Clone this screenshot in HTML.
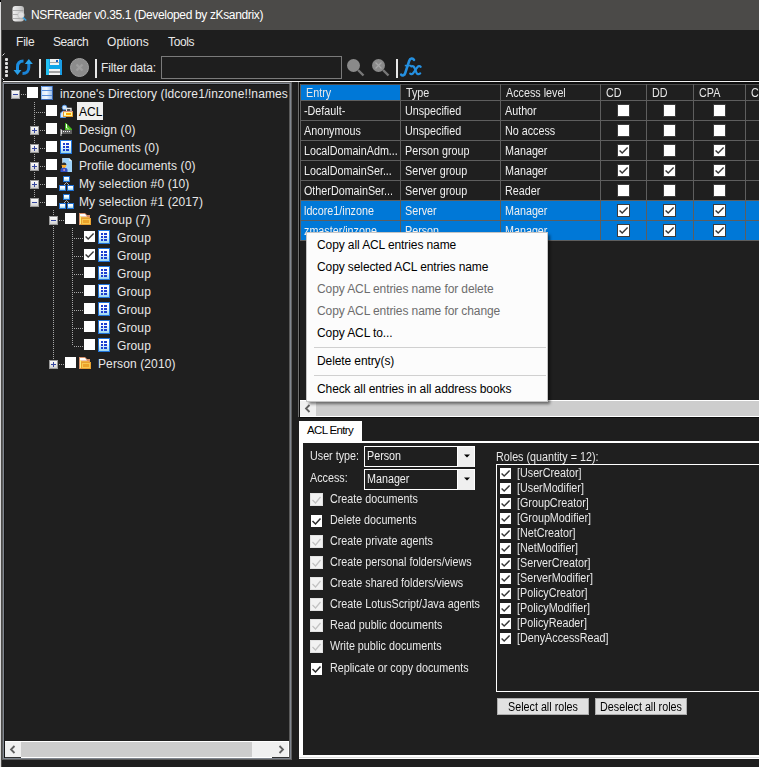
<!DOCTYPE html><html><head><meta charset="utf-8"><style>
*{margin:0;padding:0;box-sizing:border-box}
html,body{width:759px;height:767px;overflow:hidden;background:#1e1e1e}
body{position:relative;font-family:"Liberation Sans",sans-serif;font-size:12px;color:#e8e8e8}
.a{position:absolute}
.t{position:absolute;white-space:nowrap;line-height:14px}
.cb{position:absolute;width:11px;height:11px;background:#fff}
.exp{position:absolute;width:9px;height:9px;background:linear-gradient(#fbfbfb,#e4e4e4 60%,#cfcfcf);border:1px solid #9a9a9a}
.exp:before{content:"";position:absolute;left:1px;top:3px;width:5px;height:1px;background:#3446a0}
.exp.p:after{content:"";position:absolute;left:3px;top:1px;width:1px;height:5px;background:#3446a0}
.vd{position:absolute;width:1px;background:repeating-linear-gradient(#a8a8a8 0 1px,transparent 1px 2px)}
.hd{position:absolute;height:1px;background:repeating-linear-gradient(90deg,#a8a8a8 0 1px,transparent 1px 2px)}
svg{position:absolute;overflow:visible}
.ms{font-size:12.5px;transform:scaleX(.86);transform-origin:0 0}
</style></head><body>
<div class="a" style="left:0;top:0;width:759px;height:30px;background:#4b4a48"></div>
<div class="a" style="left:0;top:2px;width:1px;height:765px;background:#dcdcdc"></div>
<div class="a" style="left:1px;top:30px;width:1px;height:737px;background:#4d4c4a"></div>
<div class="a" style="left:0;top:0;width:1px;height:2px;background:#000"></div>
<svg style="left:12px;top:5px" width="16" height="17" viewBox="0 0 16 17">
<defs><linearGradient id="dbg" x1="0" x2="1"><stop offset="0" stop-color="#f0f0f0"/><stop offset=".5" stop-color="#d8d8d8"/><stop offset="1" stop-color="#b8b8b8"/></linearGradient></defs>
<rect x="0.5" y="1" width="11.5" height="15.5" rx="3" fill="url(#dbg)"/>
<path d="M1 5.5h10.5M1 9.5h10.5M1 13.5h10.5" stroke="#a0a0a0" stroke-width=".8"/>
<circle cx="9" cy="10" r="3.2" fill="#e0e0e0" stroke="#b8b8b8" stroke-width=".6"/>
<path d="M11.2 12.5l3 3" stroke="#35a0e0" stroke-width="1.6"/>
</svg>
<div class="t" style="left:31px;top:8px;color:#fff;font-size:12px;letter-spacing:-0.35px">NSFReader v0.35.1 (Developed by zKsandrix)</div>
<div class="t" style="left:16px;top:35px;font-size:12px;letter-spacing:-0.2px">File</div>
<div class="t" style="left:53px;top:35px;font-size:12px;letter-spacing:-0.45px">Search</div>
<div class="t" style="left:107px;top:35px;font-size:12px;letter-spacing:0.05px">Options</div>
<div class="t" style="left:168px;top:35px;font-size:12px;letter-spacing:-0.35px">Tools</div>
<div class="a" style="left:5px;top:58px;width:3px;height:3px;border-radius:1px;background:#e0e0e0"></div>
<div class="a" style="left:5px;top:62px;width:3px;height:3px;border-radius:1px;background:#e0e0e0"></div>
<div class="a" style="left:5px;top:66px;width:3px;height:3px;border-radius:1px;background:#e0e0e0"></div>
<div class="a" style="left:5px;top:70px;width:3px;height:3px;border-radius:1px;background:#e0e0e0"></div>
<div class="a" style="left:5px;top:74px;width:3px;height:3px;border-radius:1px;background:#e0e0e0"></div>
<svg style="left:2px;top:53px" width="3" height="3" viewBox="0 0 3 3"><path d="M0.5 2.5L2.5 0.5" stroke="#e8e8e8" stroke-width="1"/></svg>
<svg style="left:2px;top:78px" width="3" height="3" viewBox="0 0 3 3"><path d="M0.5 0.5L2.5 2.5" stroke="#e8e8e8" stroke-width="1"/></svg>
<svg style="left:13px;top:58px" width="21" height="18" viewBox="0 0 21 18">
<path d="M10.5 3C6.5 3 4.5 5.5 4.5 9V12" fill="none" stroke="#1c8ee0" stroke-width="3"/>
<path d="M0.5 12h8l-4 5z" fill="#2aa0ea"/>
<path d="M9.5 15.5C13.5 15.5 15.8 13 15.8 9.5V6" fill="none" stroke="#1a84d8" stroke-width="3"/>
<path d="M11.8 6h8l-4-5z" fill="#2aa6ee"/>
</svg>
<div class="a" style="left:39px;top:59px;width:2px;height:19px;background:#e8e8e8"></div>
<svg style="left:46px;top:59px" width="16" height="16" viewBox="0 0 16 16" shape-rendering="crispEdges">
<path d="M0 0H14L16 2V16H0Z" fill="#1a9ee6"/><rect x="0" y="0" width="3" height="16" fill="#22c2f4"/>
<rect x="4" y="0" width="9" height="6" fill="#f2f2f2"/><rect x="4" y="3" width="9" height="1" fill="#a8a8a8"/><rect x="10" y="1" width="2" height="2" fill="#1a5fc0"/>
<rect x="3" y="6" width="11" height="4" fill="#10a6e8"/>
<rect x="3" y="10" width="11" height="6" fill="#f4f4f4"/><rect x="3" y="12" width="11" height="2" fill="#a4a4a4"/>
</svg>
<svg style="left:70px;top:58px" width="19" height="19" viewBox="0 0 19 19">
<circle cx="9.5" cy="9.5" r="9" fill="#8c8c8c" stroke="#a2a2a2" stroke-width="1"/>
<path d="M6.5 6.5l6 6M12.5 6.5l-6 6" stroke="#9e9e9e" stroke-width="2.4"/>
</svg>
<div class="a" style="left:95px;top:59px;width:2px;height:19px;background:#e8e8e8"></div>
<div class="t" style="left:101px;top:61px;font-size:12px;letter-spacing:-0.15px">Filter data:</div>
<div class="a" style="left:161px;top:56px;width:181px;height:23px;border:1px solid #7a7a7a"></div>
<svg style="left:346px;top:58px" width="19" height="19" viewBox="0 0 19 19">
<circle cx="7.5" cy="7.5" r="6.5" fill="#8a8a8a"/>
<path d="M12 12l5.5 5.5" stroke="#777" stroke-width="2.4"/>
</svg>
<svg style="left:371px;top:58px" width="19" height="19" viewBox="0 0 19 19">
<circle cx="7.5" cy="7.5" r="6.5" fill="#8a8a8a"/>
<path d="M4.5 4.5l6 6M10.5 4.5l-6 6" stroke="#a8a8a8" stroke-width="1.3"/>
<path d="M12 12l5.5 5.5" stroke="#777" stroke-width="2.4"/>
</svg>
<div class="a" style="left:396px;top:59px;width:2px;height:19px;background:#e8e8e8"></div>
<svg style="left:398px;top:56px" width="26" height="22" viewBox="0 0 26 22">
<path d="M16 3.8C14.8 1.8 12 2.2 11.2 4.8L7.2 17.2C6.6 19.4 4.4 20.2 3.2 18.6" fill="none" stroke="#2590e0" stroke-width="2.6" stroke-linecap="round"/>
<path d="M6.8 9.6H13.4" stroke="#2590e0" stroke-width="1.6"/>
<path d="M13.2 10.4C15.2 9.6 16.2 10.6 17 13L18.4 16.6C19 18.4 20.6 18.6 22.2 17.4" fill="none" stroke="#2590e0" stroke-width="2.2" stroke-linecap="round"/>
<path d="M22.6 10.8C21.6 9.6 20.2 10 19.2 11.4L15.4 16.8C14.4 18.4 13 18.6 12.2 17.6" fill="none" stroke="#2590e0" stroke-width="2.2" stroke-linecap="round"/>
</svg>
<div class="a" style="left:3px;top:80px;width:756px;height:1px;background:#0c0c0c"></div>
<div class="a" style="left:3px;top:81px;width:756px;height:1px;background:#f0f0f0"></div>
<div class="a" style="left:2px;top:82px;width:290px;height:678px;border:1px solid #5e5e5e;background:#1f1f1f"></div>
<div class="a" style="left:3px;top:83px;width:288px;height:676px;border:1px solid #80868f"></div>
<div class="a" style="left:4px;top:84px;width:1px;height:674px;background:#151515"></div>
<div class="a" style="left:4px;top:84px;width:286px;height:1px;background:#151515"></div>
<div class="a" style="left:289px;top:84px;width:1px;height:674px;background:#5a5a5a"></div>
<svg width="0" height="0" style="left:0;top:0"><defs>
<linearGradient id="gbl" x1="0" y1="0" x2="0" y2="1"><stop offset="0" stop-color="#ffffff"/><stop offset=".4" stop-color="#f4fbff"/><stop offset="1" stop-color="#98d4f0"/></linearGradient>
<linearGradient id="gdbrow" x1="0" y1="0" x2="1" y2="0"><stop offset="0" stop-color="#dceafb"/><stop offset=".45" stop-color="#f0f6fd"/><stop offset="1" stop-color="#9cc0ec"/></linearGradient>
<symbol id="idb" viewBox="0 0 12 14"><rect x="0" y="0" width="12" height="14" fill="#5a8fdc"/><rect x="0" y="0" width="1" height="14" fill="#86b6f0"/><rect x="11" y="0" width="1" height="14" fill="#3a66b0"/><rect x="0" y="13" width="12" height="1" fill="#3c68b2"/>
<rect x="1" y="1" width="10" height="3" fill="url(#gdbrow)"/><rect x="1" y="5" width="10" height="4" fill="url(#gdbrow)"/><rect x="1" y="10" width="10" height="3" fill="url(#gdbrow)"/></symbol>
<symbol id="iacl" viewBox="0 0 16 16"><circle cx="6.5" cy="5.5" r="2.3" fill="#d8e8fa" stroke="#5a9ae8" stroke-width="1"/><path d="M2.5 15.5v-2.5a3 3.5 0 0 1 5 -3v5.5z" fill="#d8e8fa" stroke="#5a9ae8" stroke-width="1"/>
<path d="M8.5 9V6.5h4.5V9" fill="none" stroke="#e8e8e8" stroke-width="1.4"/><rect x="9.5" y="7" width="2.5" height="2" fill="#505050"/>
<rect x="5" y="9" width="10" height="6" fill="#e39a2a"/><rect x="6" y="10" width="8" height="4" fill="#fff59a"/><rect x="8" y="11" width="5" height="2" fill="#ffa800"/><rect x="6.5" y="11" width="1" height="2" fill="#fff"/><rect x="5" y="9" width="10" height="1" fill="#d89080"/></symbol>
<symbol id="idesign" viewBox="0 0 16 16" shape-rendering="crispEdges"><path d="M7 3H8L14 9V10H7Z" fill="#44b820" shape-rendering="auto"/><path d="M8.5 6.5L12 9.5H8.5Z" fill="#9ae070" shape-rendering="auto"/><rect x="8" y="4" width="1" height="4" fill="#ffffff"/>
<rect x="4" y="10" width="10" height="4" fill="#5e5e5e"/><rect x="5" y="11" width="1" height="1" fill="#f4f4f4"/><rect x="7" y="11" width="1" height="1" fill="#f4f4f4"/><rect x="9" y="11" width="1" height="1" fill="#f4f4f4"/><rect x="11" y="11" width="1" height="1" fill="#f4f4f4"/>
<rect x="2" y="9" width="2" height="7" fill="#7a7a7a"/><rect x="3" y="10" width="1" height="4" fill="#e0e0e0"/></symbol>
<symbol id="idoc" viewBox="0 0 16 16" shape-rendering="crispEdges"><rect x="2" y="2" width="12" height="14" fill="#1f72d8"/><rect x="3" y="3" width="10" height="12" fill="url(#gbl)"/>
<rect x="5" y="5" width="2" height="2" fill="#1b3ed0"/><rect x="8" y="5" width="3" height="2" fill="#1b3ed0"/><rect x="5" y="8" width="2" height="2" fill="#1b3ed0"/><rect x="8" y="8" width="3" height="2" fill="#1b3ed0"/><rect x="5" y="11" width="2" height="2" fill="#1b3ed0"/><rect x="8" y="11" width="3" height="2" fill="#1b3ed0"/></symbol>
<symbol id="iprof" viewBox="0 0 16 16"><path d="M4 2h7l3 3v11H4z" fill="#9fd3fb"/><path d="M11 2v3h3z" fill="#e0f2ff"/><rect x="4" y="2" width="1" height="14" fill="#b0b8c0"/>
<circle cx="6" cy="9.5" r="2.3" fill="#ffb030"/><path d="M3.6 9a2.4 2.6 0 0 1 4.8 0z" fill="#333"/><rect x="5" y="11" width="2" height="2" fill="#ff9f20"/><path d="M2.5 16v-2a3.5 2.2 0 0 1 7 0v2z" fill="#3050c8"/><rect x="5.5" y="13" width="1.2" height="2" fill="#f4a0b0"/></symbol>
<symbol id="isel" viewBox="0 0 20 20"><path d="M9.5 8.5L7 11M9.5 8.5L12 11" stroke="#b0b0b0" stroke-width="1" fill="none"/>
<rect x="6" y="2" width="7" height="6" fill="#1e6fd0"/><rect x="7" y="3" width="5" height="4" fill="url(#gbl)"/>
<rect x="2" y="11" width="7" height="6" fill="#1e6fd0"/><rect x="3" y="12" width="5" height="4" fill="url(#gbl)"/>
<rect x="10" y="11" width="7" height="6" fill="#1e6fd0"/><rect x="11" y="12" width="5" height="4" fill="url(#gbl)"/></symbol>
<symbol id="ifold" viewBox="0 0 18 18"><path d="M2 3h6l2 2h3v10H2z" fill="#d8906a"/><path d="M3 4h5l2 2.5H3z" fill="#ffffff"/><rect x="3" y="6" width="1" height="8" fill="#fff080"/><rect x="4" y="7" width="8" height="1" fill="#f0b040"/>
<rect x="4" y="8" width="10" height="7" fill="#e8a030"/><rect x="5" y="9" width="8" height="5" fill="#f8c850"/><rect x="6" y="10" width="6" height="3" fill="#eca42a"/></symbol>
<symbol id="ichk" viewBox="0 0 11 11"><path d="M1.6 5.4L4.2 8L9.6 2.6" fill="none" stroke="#383838" stroke-width="1.4"/></symbol>
</defs></svg>
<div class="vd" style="left:34px;top:102px;height:101px"></div>
<div class="vd" style="left:53px;top:210px;height:154px"></div>
<div class="vd" style="left:72px;top:228px;height:118px"></div>
<div class="a" style="left:5px;top:84px;width:284px;height:674px;overflow:hidden">
<div class="hd" style="left:16px;top:10px;width:6px"></div>
<div class="exp" style="left:6px;top:6px"></div>
<div class="cb" style="left:22px;top:3px"></div>
<svg style="left:36px;top:2px" width="12" height="14"><use href="#idb"/></svg>
<div class="t" style="left:55px;top:3px;letter-spacing:0.12px">inzone's Directory (ldcore1/inzone!!names</div>
<div class="hd" style="left:31px;top:28px;width:10px"></div>
<div class="cb" style="left:41px;top:21px"></div>
<svg style="left:53px;top:18px" width="16" height="16"><use href="#iacl"/></svg>
<div class="a" style="left:72px;top:18px;width:26px;height:18px;background:#f0f0f0"></div>
<div class="t" style="left:74px;top:21px;color:#000">ACL</div>
<div class="hd" style="left:35px;top:46px;width:6px"></div>
<div class="exp p" style="left:25px;top:42px"></div>
<div class="cb" style="left:41px;top:39px"></div>
<svg style="left:53px;top:36px" width="16" height="16"><use href="#idesign"/></svg>
<div class="t" style="left:74px;top:39px;letter-spacing:0.12px">Design (0)</div>
<div class="hd" style="left:35px;top:64px;width:6px"></div>
<div class="exp p" style="left:25px;top:60px"></div>
<div class="cb" style="left:41px;top:57px"></div>
<svg style="left:53px;top:54px" width="16" height="16"><use href="#idoc"/></svg>
<div class="t" style="left:74px;top:57px;letter-spacing:0.12px">Documents (0)</div>
<div class="hd" style="left:35px;top:82px;width:6px"></div>
<div class="exp p" style="left:25px;top:78px"></div>
<div class="cb" style="left:41px;top:75px"></div>
<svg style="left:53px;top:72px" width="16" height="16"><use href="#iprof"/></svg>
<div class="t" style="left:74px;top:75px;letter-spacing:0.12px">Profile documents (0)</div>
<div class="hd" style="left:35px;top:100px;width:6px"></div>
<div class="exp p" style="left:25px;top:96px"></div>
<div class="cb" style="left:41px;top:93px"></div>
<svg style="left:52px;top:90px" width="20" height="20"><use href="#isel"/></svg>
<div class="t" style="left:74px;top:93px;letter-spacing:0.12px">My selection #0 (10)</div>
<div class="hd" style="left:35px;top:118px;width:6px"></div>
<div class="exp" style="left:25px;top:114px"></div>
<div class="cb" style="left:41px;top:111px"></div>
<svg style="left:52px;top:108px" width="20" height="20"><use href="#isel"/></svg>
<div class="t" style="left:74px;top:111px;letter-spacing:0.12px">My selection #1 (2017)</div>
<div class="hd" style="left:54px;top:136px;width:6px"></div>
<div class="exp" style="left:44px;top:132px"></div>
<div class="cb" style="left:60px;top:129px"></div>
<svg style="left:72px;top:126px" width="18" height="18"><use href="#ifold"/></svg>
<div class="t" style="left:93px;top:129px;letter-spacing:0.12px">Group (7)</div>
<div class="hd" style="left:69px;top:154px;width:10px"></div>
<div class="cb" style="left:79px;top:147px"><svg style="left:0;top:0" width="11" height="11"><use href="#ichk"/></svg></div>
<svg style="left:91px;top:144px" width="16" height="16"><use href="#idoc"/></svg>
<div class="t" style="left:112px;top:147px;letter-spacing:0.12px">Group</div>
<div class="hd" style="left:69px;top:172px;width:10px"></div>
<div class="cb" style="left:79px;top:165px"><svg style="left:0;top:0" width="11" height="11"><use href="#ichk"/></svg></div>
<svg style="left:91px;top:162px" width="16" height="16"><use href="#idoc"/></svg>
<div class="t" style="left:112px;top:165px;letter-spacing:0.12px">Group</div>
<div class="hd" style="left:69px;top:190px;width:10px"></div>
<div class="cb" style="left:79px;top:183px"></div>
<svg style="left:91px;top:180px" width="16" height="16"><use href="#idoc"/></svg>
<div class="t" style="left:112px;top:183px;letter-spacing:0.12px">Group</div>
<div class="hd" style="left:69px;top:208px;width:10px"></div>
<div class="cb" style="left:79px;top:201px"></div>
<svg style="left:91px;top:198px" width="16" height="16"><use href="#idoc"/></svg>
<div class="t" style="left:112px;top:201px;letter-spacing:0.12px">Group</div>
<div class="hd" style="left:69px;top:226px;width:10px"></div>
<div class="cb" style="left:79px;top:219px"></div>
<svg style="left:91px;top:216px" width="16" height="16"><use href="#idoc"/></svg>
<div class="t" style="left:112px;top:219px;letter-spacing:0.12px">Group</div>
<div class="hd" style="left:69px;top:244px;width:10px"></div>
<div class="cb" style="left:79px;top:237px"></div>
<svg style="left:91px;top:234px" width="16" height="16"><use href="#idoc"/></svg>
<div class="t" style="left:112px;top:237px;letter-spacing:0.12px">Group</div>
<div class="hd" style="left:69px;top:262px;width:10px"></div>
<div class="cb" style="left:79px;top:255px"></div>
<svg style="left:91px;top:252px" width="16" height="16"><use href="#idoc"/></svg>
<div class="t" style="left:112px;top:255px;letter-spacing:0.12px">Group</div>
<div class="hd" style="left:54px;top:280px;width:6px"></div>
<div class="exp p" style="left:44px;top:276px"></div>
<div class="cb" style="left:60px;top:273px"></div>
<svg style="left:72px;top:270px" width="18" height="18"><use href="#ifold"/></svg>
<div class="t" style="left:93px;top:273px;letter-spacing:0.12px">Person (2010)</div>
</div>
<div class="a" style="left:298px;top:82px;width:461px;height:336px;background:#1f1f1f"></div>
<div class="a" style="left:298px;top:82px;width:1px;height:335px;background:#6e6e6e"></div>
<div class="a" style="left:299px;top:82px;width:1px;height:336px;background:#0c0c0c"></div>
<div class="a" style="left:299px;top:82px;width:460px;height:2px;background:#0c0c0c"></div>
<div class="a" style="left:300px;top:84px;width:459px;height:1px;background:#4a4a4a"></div>
<div class="a" style="left:301px;top:85px;width:99px;height:15px;background:#0078d7"></div>
<div class="a" style="left:300px;top:84px;width:1px;height:156px;background:#5e5e5e"></div>
<div class="a" style="left:400px;top:84px;width:1px;height:156px;background:#5e5e5e"></div>
<div class="a" style="left:500px;top:84px;width:1px;height:156px;background:#5e5e5e"></div>
<div class="a" style="left:600px;top:84px;width:1px;height:156px;background:#5e5e5e"></div>
<div class="a" style="left:646px;top:84px;width:1px;height:156px;background:#5e5e5e"></div>
<div class="a" style="left:693px;top:84px;width:1px;height:156px;background:#5e5e5e"></div>
<div class="a" style="left:745px;top:84px;width:1px;height:156px;background:#5e5e5e"></div>
<div class="a" style="left:300px;top:100px;width:459px;height:1px;background:#5e5e5e"></div>
<div class="a" style="left:300px;top:120px;width:459px;height:1px;background:#5e5e5e"></div>
<div class="a" style="left:300px;top:140px;width:459px;height:1px;background:#5e5e5e"></div>
<div class="a" style="left:300px;top:160px;width:459px;height:1px;background:#5e5e5e"></div>
<div class="a" style="left:300px;top:180px;width:459px;height:1px;background:#5e5e5e"></div>
<div class="a" style="left:300px;top:200px;width:459px;height:1px;background:#5e5e5e"></div>
<div class="a" style="left:300px;top:220px;width:459px;height:1px;background:#5e5e5e"></div>
<div class="a" style="left:300px;top:240px;width:459px;height:1px;background:#5e5e5e"></div>
<div class="a" style="left:301px;top:201px;width:458px;height:39px;background:#0078d7"></div>
<div class="a" style="left:301px;top:220px;width:458px;height:1px;background:#5e5e5e"></div>
<div class="a" style="left:400px;top:201px;width:1px;height:39px;background:#5e5e5e"></div>
<div class="a" style="left:500px;top:201px;width:1px;height:39px;background:#5e5e5e"></div>
<div class="a" style="left:600px;top:201px;width:1px;height:39px;background:#5e5e5e"></div>
<div class="a" style="left:646px;top:201px;width:1px;height:39px;background:#5e5e5e"></div>
<div class="a" style="left:693px;top:201px;width:1px;height:39px;background:#5e5e5e"></div>
<div class="a" style="left:745px;top:201px;width:1px;height:39px;background:#5e5e5e"></div>
<div class="t ms" style="left:306px;top:86px">Entry</div>
<div class="t ms" style="left:406px;top:86px">Type</div>
<div class="t ms" style="left:506px;top:86px">Access level</div>
<div class="t ms" style="left:606px;top:86px">CD</div>
<div class="t ms" style="left:652px;top:86px">DD</div>
<div class="t ms" style="left:699px;top:86px">CPA</div>
<div class="t ms" style="left:751px;top:86px">C</div>
<div class="t ms" style="left:304px;top:104px;color:#f0f0f0">-Default-</div>
<div class="t ms" style="left:405px;top:104px;color:#f0f0f0">Unspecified</div>
<div class="t ms" style="left:505px;top:104px;color:#f0f0f0">Author</div>
<div class="cb" style="left:618px;top:105px;box-shadow:0 0 0 1px #3c3c3c"></div>
<div class="cb" style="left:664px;top:105px;box-shadow:0 0 0 1px #3c3c3c"></div>
<div class="cb" style="left:714px;top:105px;box-shadow:0 0 0 1px #3c3c3c"></div>
<div class="t ms" style="left:304px;top:124px;color:#f0f0f0">Anonymous</div>
<div class="t ms" style="left:405px;top:124px;color:#f0f0f0">Unspecified</div>
<div class="t ms" style="left:505px;top:124px;color:#f0f0f0">No access</div>
<div class="cb" style="left:618px;top:125px;box-shadow:0 0 0 1px #3c3c3c"></div>
<div class="cb" style="left:664px;top:125px;box-shadow:0 0 0 1px #3c3c3c"></div>
<div class="cb" style="left:714px;top:125px;box-shadow:0 0 0 1px #3c3c3c"></div>
<div class="t ms" style="left:304px;top:144px;color:#f0f0f0">LocalDomainAdm...</div>
<div class="t ms" style="left:405px;top:144px;color:#f0f0f0">Person group</div>
<div class="t ms" style="left:505px;top:144px;color:#f0f0f0">Manager</div>
<div class="cb" style="left:618px;top:145px;box-shadow:0 0 0 1px #3c3c3c"><svg style="left:0;top:0" width="11" height="11"><use href="#ichk"/></svg></div>
<div class="cb" style="left:664px;top:145px;box-shadow:0 0 0 1px #3c3c3c"></div>
<div class="cb" style="left:714px;top:145px;box-shadow:0 0 0 1px #3c3c3c"><svg style="left:0;top:0" width="11" height="11"><use href="#ichk"/></svg></div>
<div class="t ms" style="left:304px;top:164px;color:#f0f0f0">LocalDomainSer...</div>
<div class="t ms" style="left:405px;top:164px;color:#f0f0f0">Server group</div>
<div class="t ms" style="left:505px;top:164px;color:#f0f0f0">Manager</div>
<div class="cb" style="left:618px;top:165px;box-shadow:0 0 0 1px #3c3c3c"><svg style="left:0;top:0" width="11" height="11"><use href="#ichk"/></svg></div>
<div class="cb" style="left:664px;top:165px;box-shadow:0 0 0 1px #3c3c3c"><svg style="left:0;top:0" width="11" height="11"><use href="#ichk"/></svg></div>
<div class="cb" style="left:714px;top:165px;box-shadow:0 0 0 1px #3c3c3c"><svg style="left:0;top:0" width="11" height="11"><use href="#ichk"/></svg></div>
<div class="t ms" style="left:304px;top:184px;color:#f0f0f0">OtherDomainSer...</div>
<div class="t ms" style="left:405px;top:184px;color:#f0f0f0">Server group</div>
<div class="t ms" style="left:505px;top:184px;color:#f0f0f0">Reader</div>
<div class="cb" style="left:618px;top:185px;box-shadow:0 0 0 1px #3c3c3c"></div>
<div class="cb" style="left:664px;top:185px;box-shadow:0 0 0 1px #3c3c3c"></div>
<div class="cb" style="left:714px;top:185px;box-shadow:0 0 0 1px #3c3c3c"></div>
<div class="t ms" style="left:304px;top:204px;color:#f0f0f0">ldcore1/inzone</div>
<div class="t ms" style="left:405px;top:204px;color:#f0f0f0">Server</div>
<div class="t ms" style="left:505px;top:204px;color:#f0f0f0">Manager</div>
<div class="cb" style="left:618px;top:205px;box-shadow:0 0 0 1px #3c3c3c"><svg style="left:0;top:0" width="11" height="11"><use href="#ichk"/></svg></div>
<div class="cb" style="left:664px;top:205px;box-shadow:0 0 0 1px #3c3c3c"><svg style="left:0;top:0" width="11" height="11"><use href="#ichk"/></svg></div>
<div class="cb" style="left:714px;top:205px;box-shadow:0 0 0 1px #3c3c3c"><svg style="left:0;top:0" width="11" height="11"><use href="#ichk"/></svg></div>
<div class="t ms" style="left:304px;top:224px;color:#f0f0f0">zmaster/inzone</div>
<div class="t ms" style="left:405px;top:224px;color:#f0f0f0">Person</div>
<div class="t ms" style="left:505px;top:224px;color:#f0f0f0">Manager</div>
<div class="cb" style="left:618px;top:225px;box-shadow:0 0 0 1px #3c3c3c"><svg style="left:0;top:0" width="11" height="11"><use href="#ichk"/></svg></div>
<div class="cb" style="left:664px;top:225px;box-shadow:0 0 0 1px #3c3c3c"><svg style="left:0;top:0" width="11" height="11"><use href="#ichk"/></svg></div>
<div class="cb" style="left:714px;top:225px;box-shadow:0 0 0 1px #3c3c3c"><svg style="left:0;top:0" width="11" height="11"><use href="#ichk"/></svg></div>
<div class="a" style="left:300px;top:400px;width:459px;height:17px;background:#fff"></div>
<div class="a" style="left:300px;top:401px;width:16px;height:15px;background:#f0f0f0"></div>
<div class="a" style="left:316px;top:401px;width:443px;height:15px;background:#cdcdcd"></div>
<svg style="left:304px;top:404px" width="8" height="9" viewBox="0 0 8 9"><path d="M5.5 1L2 4.5L5.5 8" fill="none" stroke="#606060" stroke-width="1.8"/></svg>
<div class="a" style="left:299px;top:417px;width:460px;height:1px;background:#0c0c0c"></div>
<div class="a" style="left:309px;top:235px;width:241px;height:169px;background:rgba(0,0,0,.5);filter:blur(1.5px)"></div>
<div class="a" style="left:306px;top:232px;width:242px;height:170px;background:#fcfcfc;border:1px solid #c4c4c4"></div>
<div class="t" style="left:317px;top:238px;font-size:12px;letter-spacing:-0.1px;color:#000">Copy all ACL entries name</div>
<div class="t" style="left:317px;top:260px;font-size:12px;letter-spacing:-0.1px;color:#000">Copy selected ACL entries name</div>
<div class="t" style="left:317px;top:282px;font-size:12px;letter-spacing:-0.1px;color:#6d6d6d">Copy ACL entries name for delete</div>
<div class="t" style="left:317px;top:304px;font-size:12px;letter-spacing:-0.1px;color:#6d6d6d">Copy ACL entries name for change</div>
<div class="t" style="left:317px;top:326px;font-size:12px;letter-spacing:-0.1px;color:#000">Copy ACL to...</div>
<div class="t" style="left:317px;top:354px;font-size:12px;letter-spacing:-0.1px;color:#000">Delete entry(s)</div>
<div class="t" style="left:317px;top:382px;font-size:12px;letter-spacing:-0.1px;color:#000">Check all entries in all address books</div>
<div class="a" style="left:314px;top:347px;width:232px;height:1px;background:#d0d0d0"></div>
<div class="a" style="left:314px;top:375px;width:232px;height:1px;background:#d0d0d0"></div>
<div class="a" style="left:5px;top:741px;width:284px;height:17px;background:#fff"></div>
<div class="a" style="left:272px;top:757px;width:17px;height:1px;background:#303030"></div>
<div class="a" style="left:5px;top:757px;width:16px;height:1px;background:#303030"></div>
<div class="a" style="left:5px;top:742px;width:16px;height:15px;background:#f0f0f0"></div>
<div class="a" style="left:21px;top:742px;width:231px;height:15px;background:#cdcdcd"></div>
<div class="a" style="left:252px;top:742px;width:36px;height:15px;background:#f0f0f0"></div>
<svg style="left:9px;top:745px" width="8" height="9" viewBox="0 0 8 9"><path d="M5.5 1L2 4.5L5.5 8" fill="none" stroke="#606060" stroke-width="1.8"/></svg>
<svg style="left:277px;top:745px" width="8" height="9" viewBox="0 0 8 9"><path d="M2.5 1L6 4.5L2.5 8" fill="none" stroke="#606060" stroke-width="1.8"/></svg>
<div class="a" style="left:299px;top:421px;width:63px;height:22px;background:#fff"></div>
<div class="t" style="left:307px;top:423px;font-size:11.5px;letter-spacing:-0.65px;color:#000">ACL Entry</div>
<div class="a" style="left:299px;top:441px;width:460px;height:318px;background:#fff"></div>
<div class="a" style="left:299px;top:757px;width:460px;height:1px;background:#dcdcdc"></div>
<div class="a" style="left:303px;top:443px;width:456px;height:312px;background:#1f1f1f"></div>
<div class="t ms" style="left:310px;top:449px">User type:</div>
<div class="t ms" style="left:310px;top:471px">Access:</div>
<div class="a" style="left:364px;top:446px;width:111px;height:21px;background:#fff"></div>
<div class="a" style="left:365px;top:447px;width:92px;height:19px;background:#1f1f1f"></div>
<div class="a" style="left:458px;top:447px;width:16px;height:20px;background:#efefef"></div>
<svg style="left:464px;top:454px" width="6" height="4" viewBox="0 0 6 4"><path d="M0 0.5h6L3 3.5z" fill="#000"/></svg>
<div class="t ms" style="left:367px;top:449px;color:#f0f0f0">Person</div>
<div class="a" style="left:364px;top:469px;width:111px;height:21px;background:#fff"></div>
<div class="a" style="left:365px;top:470px;width:92px;height:19px;background:#1f1f1f"></div>
<div class="a" style="left:458px;top:470px;width:16px;height:20px;background:#efefef"></div>
<svg style="left:464px;top:477px" width="6" height="4" viewBox="0 0 6 4"><path d="M0 0.5h6L3 3.5z" fill="#000"/></svg>
<div class="t ms" style="left:367px;top:472px;color:#f0f0f0">Manager</div>
<div class="a" style="left:310px;top:493px;width:13px;height:13px;background:#f2f2f2;border:1px solid #e2e2e2"><svg style="left:-1px;top:-1px" width="13" height="13" viewBox="0 0 13 13"><path d="M2.5 7l3 3L10.5 4" fill="none" stroke="#c2c2c2" stroke-width="1.2"/></svg></div>
<div class="t ms" style="left:330px;top:492px">Create documents</div>
<div class="a" style="left:311px;top:515px;width:11px;height:12px;background:#fff"><svg style="left:0;top:0" width="11" height="12" viewBox="0 0 11 12"><path d="M1.5 6l3 3L9.5 3.5" fill="none" stroke="#2a2a2a" stroke-width="1.5"/></svg></div>
<div class="t ms" style="left:330px;top:513px">Delete documents</div>
<div class="a" style="left:310px;top:535px;width:13px;height:13px;background:#f2f2f2;border:1px solid #e2e2e2"><svg style="left:-1px;top:-1px" width="13" height="13" viewBox="0 0 13 13"><path d="M2.5 7l3 3L10.5 4" fill="none" stroke="#c2c2c2" stroke-width="1.2"/></svg></div>
<div class="t ms" style="left:330px;top:534px">Create private agents</div>
<div class="a" style="left:310px;top:556px;width:13px;height:13px;background:#f2f2f2;border:1px solid #e2e2e2"><svg style="left:-1px;top:-1px" width="13" height="13" viewBox="0 0 13 13"><path d="M2.5 7l3 3L10.5 4" fill="none" stroke="#c2c2c2" stroke-width="1.2"/></svg></div>
<div class="t ms" style="left:330px;top:555px">Create personal folders/views</div>
<div class="a" style="left:310px;top:577px;width:13px;height:13px;background:#f2f2f2;border:1px solid #e2e2e2"><svg style="left:-1px;top:-1px" width="13" height="13" viewBox="0 0 13 13"><path d="M2.5 7l3 3L10.5 4" fill="none" stroke="#c2c2c2" stroke-width="1.2"/></svg></div>
<div class="t ms" style="left:330px;top:576px">Create shared folders/views</div>
<div class="a" style="left:310px;top:598px;width:13px;height:13px;background:#f2f2f2;border:1px solid #e2e2e2"><svg style="left:-1px;top:-1px" width="13" height="13" viewBox="0 0 13 13"><path d="M2.5 7l3 3L10.5 4" fill="none" stroke="#c2c2c2" stroke-width="1.2"/></svg></div>
<div class="t ms" style="left:330px;top:597px">Create LotusScript/Java agents</div>
<div class="a" style="left:310px;top:619px;width:13px;height:13px;background:#f2f2f2;border:1px solid #e2e2e2"><svg style="left:-1px;top:-1px" width="13" height="13" viewBox="0 0 13 13"><path d="M2.5 7l3 3L10.5 4" fill="none" stroke="#c2c2c2" stroke-width="1.2"/></svg></div>
<div class="t ms" style="left:330px;top:618px">Read public documents</div>
<div class="a" style="left:310px;top:640px;width:13px;height:13px;background:#f2f2f2;border:1px solid #e2e2e2"><svg style="left:-1px;top:-1px" width="13" height="13" viewBox="0 0 13 13"><path d="M2.5 7l3 3L10.5 4" fill="none" stroke="#c2c2c2" stroke-width="1.2"/></svg></div>
<div class="t ms" style="left:330px;top:639px">Write public documents</div>
<div class="a" style="left:311px;top:663px;width:11px;height:12px;background:#fff"><svg style="left:0;top:0" width="11" height="12" viewBox="0 0 11 12"><path d="M1.5 6l3 3L9.5 3.5" fill="none" stroke="#2a2a2a" stroke-width="1.5"/></svg></div>
<div class="t ms" style="left:330px;top:661px">Replicate or copy documents</div>
<div class="t ms" style="left:496px;top:450px">Roles (quantity = 12):</div>
<div class="a" style="left:496px;top:464px;width:263px;height:228px;background:#fff"></div>
<div class="a" style="left:497px;top:465px;width:262px;height:226px;background:#1f1f1f"></div>
<div class="cb" style="left:500px;top:468px"><svg style="left:0;top:0" width="11" height="11"><use href="#ichk"/></svg></div>
<div class="t ms" style="left:517px;top:466px">[UserCreator]</div>
<div class="cb" style="left:500px;top:483px"><svg style="left:0;top:0" width="11" height="11"><use href="#ichk"/></svg></div>
<div class="t ms" style="left:517px;top:481px">[UserModifier]</div>
<div class="cb" style="left:500px;top:498px"><svg style="left:0;top:0" width="11" height="11"><use href="#ichk"/></svg></div>
<div class="t ms" style="left:517px;top:496px">[GroupCreator]</div>
<div class="cb" style="left:500px;top:513px"><svg style="left:0;top:0" width="11" height="11"><use href="#ichk"/></svg></div>
<div class="t ms" style="left:517px;top:511px">[GroupModifier]</div>
<div class="cb" style="left:500px;top:528px"><svg style="left:0;top:0" width="11" height="11"><use href="#ichk"/></svg></div>
<div class="t ms" style="left:517px;top:526px">[NetCreator]</div>
<div class="cb" style="left:500px;top:543px"><svg style="left:0;top:0" width="11" height="11"><use href="#ichk"/></svg></div>
<div class="t ms" style="left:517px;top:541px">[NetModifier]</div>
<div class="cb" style="left:500px;top:558px"><svg style="left:0;top:0" width="11" height="11"><use href="#ichk"/></svg></div>
<div class="t ms" style="left:517px;top:556px">[ServerCreator]</div>
<div class="cb" style="left:500px;top:573px"><svg style="left:0;top:0" width="11" height="11"><use href="#ichk"/></svg></div>
<div class="t ms" style="left:517px;top:571px">[ServerModifier]</div>
<div class="cb" style="left:500px;top:588px"><svg style="left:0;top:0" width="11" height="11"><use href="#ichk"/></svg></div>
<div class="t ms" style="left:517px;top:586px">[PolicyCreator]</div>
<div class="cb" style="left:500px;top:603px"><svg style="left:0;top:0" width="11" height="11"><use href="#ichk"/></svg></div>
<div class="t ms" style="left:517px;top:601px">[PolicyModifier]</div>
<div class="cb" style="left:500px;top:618px"><svg style="left:0;top:0" width="11" height="11"><use href="#ichk"/></svg></div>
<div class="t ms" style="left:517px;top:616px">[PolicyReader]</div>
<div class="cb" style="left:500px;top:633px"><svg style="left:0;top:0" width="11" height="11"><use href="#ichk"/></svg></div>
<div class="t ms" style="left:517px;top:631px">[DenyAccessRead]</div>
<div class="a" style="left:497px;top:698px;width:92px;height:17px;background:#e1e1e1;border:1px solid #adadad"></div>
<div class="t ms" style="left:497px;top:700px;width:106.98px;text-align:center;color:#000">Select all roles</div>
<div class="a" style="left:595px;top:698px;width:92px;height:17px;background:#e1e1e1;border:1px solid #adadad"></div>
<div class="t ms" style="left:595px;top:700px;width:106.98px;text-align:center;color:#000">Deselect all roles</div>
</body></html>
